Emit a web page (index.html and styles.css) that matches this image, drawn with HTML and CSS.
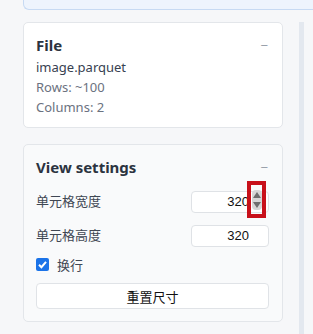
FILE: index.html
```html
<!DOCTYPE html>
<html>
<head>
<meta charset="utf-8">
<link rel="stylesheet" href="styles.css">
</head>
<body>
<div class="banner"></div>
<div class="layout">
  <div class="sidebar">
    <section class="card">
      <div class="card-head"><h2>File</h2><span class="collapse">−</span></div>
      <div class="file-name">image.parquet</div>
      <div class="meta">Rows: ~100</div>
      <div class="meta">Columns: 2</div>
    </section>
    <section class="card card-alt">
      <div class="card-head"><h2>View settings</h2><span class="collapse">−</span></div>
      <div class="field">
        <label class="field-label">单元格宽度</label>
        <div class="input-wrap">
          <input class="num" type="text" value="320">
          <div class="spinner">
            <svg width="10" height="20" viewBox="0 0 10 20"><rect x="0" y="0" width="10" height="20" rx="4" fill="#d6d6d6"/><path d="M5 2 L9 8 L1 8 Z" fill="#6e6e6e"/><path d="M5 18 L9 12 L1 12 Z" fill="#6e6e6e"/></svg>
          </div>
          <div class="highlight"></div>
        </div>
      </div>
      <div class="field">
        <label class="field-label">单元格高度</label>
        <div class="input-wrap">
          <input class="num" type="text" value="320">
        </div>
      </div>
      <label class="check">
        <span class="box"><svg width="13" height="13" viewBox="0 0 13 13"><path d="M3 6.8 L5.4 9.2 L10 3.8" fill="none" stroke="#fff" stroke-width="2"/></svg></span>
        <span>换行</span>
      </label>
      <button class="reset">重置尺寸</button>
    </section>
  </div>
  <div class="strip"></div>
</div>
</body>
</html>
```

FILE: styles.css
```css
* { box-sizing: border-box; }
html, body { margin: 0; padding: 0; }
body {
  background: #f6f7f9;
  font-family: "Noto Sans", "Noto Sans CJK SC", sans-serif;
  width: 313px;
  height: 334px;
  overflow: hidden;
}
.banner {
  margin-left: 23px;
  height: 10px;
  background: #eef4fd;
  border-left: 1px solid #c7daf3;
  border-bottom: 1px solid #c7daf3;
  border-bottom-left-radius: 6px;
}
.layout {
  display: flex;
  padding-top: 12px;
  padding-left: 23px;
}
.sidebar {
  width: 260px;
  display: flex;
  flex-direction: column;
  gap: 16px;
}
.strip {
  margin-left: 16px;
  width: 5px;
  background: #e3e8ef;
  height: 320px;
}
.card {
  background: #fff;
  border: 1px solid #e3e6ea;
  border-radius: 5px;
  padding: 12px 13px 10px 12px;
}
.card-alt {
  background: #f9fafb;
  padding-bottom: 12px;
}
.card-head {
  display: flex;
  justify-content: space-between;
  align-items: center;
  height: 20px;
  margin-bottom: 2px;
}
.card-head h2 {
  margin: 0;
  font-size: 15px;
  font-weight: 700;
  color: #2b3340;
  line-height: 20px;
}
.collapse {
  color: #9aa1ab;
  font-size: 13px;
  font-family: "Liberation Sans", sans-serif;
  padding-right: 1px;
}
.file-name {
  font-size: 13px;
  color: #374151;
  line-height: 20px;
}
.meta {
  font-size: 13px;
  color: #6b7280;
  line-height: 20px;
}
.field {
  display: flex;
  justify-content: space-between;
  align-items: center;
  margin-top: 12px;
  height: 22px;
}
.card-alt .card-head { margin-bottom: 0; }
.field-label {
  font-size: 13px;
  color: #3f4753;
}
.input-wrap {
  position: relative;
  width: 78px;
  height: 22px;
}
.num {
  width: 100%;
  height: 100%;
  border: 1px solid #dfe2e6;
  border-radius: 4px;
  background: #fff;
  text-align: right;
  padding: 0 19px 0 4px;
  font-family: "Liberation Sans", sans-serif;
  font-size: 13px;
  color: #111;
}
.spinner {
  position: absolute;
  left: 61px;
  top: 1px;
  line-height: 0;
}
.highlight {
  position: absolute;
  left: 56px;
  top: -8px;
  width: 19px;
  height: 37px;
  border: 4px solid #c8101a;
}
.check {
  display: flex;
  align-items: center;
  gap: 8px;
  margin-top: 11px;
  font-size: 13px;
  color: #3f4753;
  height: 16px;
}
.box {
  width: 13px;
  height: 13px;
  background: #1b73e8;
  border-radius: 2px;
  line-height: 0;
}
.reset {
  display: block;
  width: 100%;
  margin-top: 11px;
  height: 26px;
  background: #fff;
  border: 1px solid #e0e3e7;
  border-radius: 4px;
  font-family: "Noto Sans CJK SC", sans-serif;
  font-size: 13px;
  color: #111;
}
```
